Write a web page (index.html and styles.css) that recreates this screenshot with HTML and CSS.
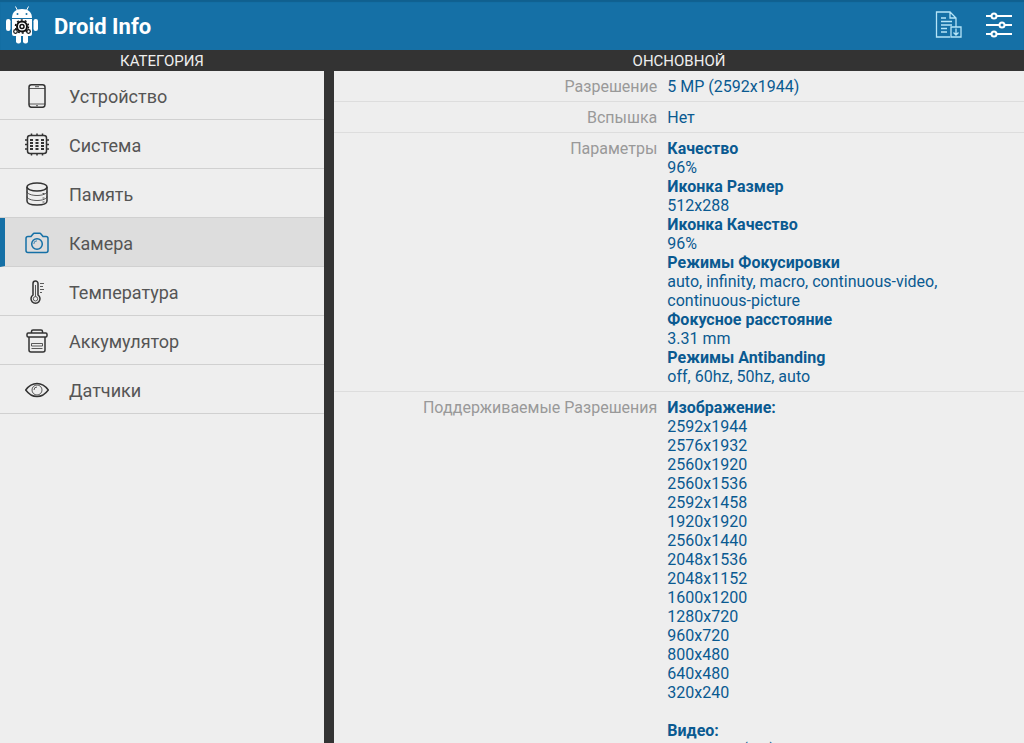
FILE: index.html
```html
<!DOCTYPE html>
<html lang="ru">
	<head>
		<meta charset="UTF-8" />
		<meta name="viewport" content="width=device-width, initial-scale=1.0" />
		<title>Droid Info</title>
		<link rel="stylesheet" href="styles.css">
	</head>
	<body>
		<header class="app-bar">
			<svg class="logo" viewBox="0 0 32 38">
				<g fill="#fff">
					<path d="M6 12C6 6 10 3 16 3S26 6 26 12z" />
					<path d="M6 13h20v15a2 2 0 0 1-2 2H8a2 2 0 0 1-2-2z" />
					<rect x="0" y="13" width="4.500" height="12" rx="2.200" />
					<rect x="27.500" y="13" width="4.500" height="12" rx="2.200" />
					<rect x="10" y="28" width="5" height="9.500" rx="2.200" />
					<rect x="17" y="28" width="5" height="9.500" rx="2.200" />
				</g>
				<path d="M9.500 0.500l2 4M22.500 0.500l-2 4" stroke="#fff" fill="none" />
				<circle cx="11.500" cy="8" r="1" fill="#1570a6" />
				<circle cx="20.500" cy="8" r="1" fill="#1570a6" />
				<g fill="none" stroke="#111">
					<circle cx="16" cy="20.500" r="5" stroke-width="2" />
					<circle cx="16" cy="20.500" r="6.500" stroke-width="1.500" stroke-dasharray="2 2.080" />
					<circle cx="16" cy="20.500" r="2" stroke-width="1.500" />
					<circle cx="9.500" cy="25.500" r="1.800" stroke-width="1.200" />
					<circle cx="22.500" cy="25.500" r="1.800" stroke-width="1.200" />
				</g>
			</svg>
			<h1>Droid Info</h1>
			<button class="icon-btn" type="button" aria-label="Сохранить отчёт">
				<svg width="28" height="28" viewBox="0 0 28 28">
					<path d="M15 26H1.500V1H15l6 6v9M15 1v6h6M6 7h5M6 10.500h11M6 14h11M6 17.500h6M6 21h6" />
					<path d="M16 16h10v10H16zM21 17.500v6M18.500 21.500L21 24l2.500-2.500" />
				</svg>
			</button>
			<button class="icon-btn settings" type="button" aria-label="Настройки">
				<svg width="28" height="28" viewBox="0 0 28 28">
					<path d="M1 5h5M12 5h15M1 14h13M20 14h7M1 23h5M12 23h15" />
					<circle cx="9" cy="5" r="2.500" />
					<circle cx="17" cy="14" r="2.500" />
					<circle cx="9" cy="23" r="2.500" />
				</svg>
			</button>
		</header>

		<main class="panes">
			<section class="pane">
				<h2>КАТЕГОРИЯ</h2>
				<nav class="menu">
					<a href="#device">
						<svg viewBox="0 0 24 24"><rect x="4" y="0.800" width="16" height="22.500" rx="2.500" /><path class="thin" d="M4 4.500h16M4 20h16M10 2.700h4M11 21.700h2" /></svg>
						Устройство
					</a>
					<a href="#system">
						<svg viewBox="0 0 24 24"><rect x="2.500" y="2.500" width="19" height="18" rx="2.500" /><path d="M6.500 0.500v2M12 0.500v2M17.500 0.500v2M6.500 20.500v2M12 20.500v2M17.500 20.500v2M0 7h2.500M0 11.500h2.500M0 16h2.500M21.500 7H24M21.500 11.500H24M21.500 16H24" /><path class="dots" d="M5 7h14M5 10h14M5 13h14M5 16h14" /></svg>
						Система
					</a>
					<a href="#memory">
						<svg viewBox="0 0 24 24"><ellipse cx="12" cy="5" rx="10" ry="4" /><path d="M2 5v14c0 2.500 4.500 4 10 4s10-1.500 10-4V5" /><path class="thin" d="M2 9.500c0 2.200 4.500 4 10 4s10-1.800 10-4M2 14.500c0 2.200 4.500 4 10 4s10-1.800 10-4M17.500 11.500h2M17.500 16h2M17.500 20h2" /></svg>
						Память
					</a>
					<a class="active" href="#camera" aria-current="page">
						<svg viewBox="0 0 24 24"><path d="M3 5.500h3l2-2.500q.5-.700 1.200-.700h5.600q.7 0 1.200.700l2 2.500h3q2 0 2 2v12q0 2-2 2H3q-2 0-2-2v-12q0-2 2-2z" /><circle cx="12" cy="13" r="5.300" /><path class="thin" d="M8.800 13a3.200 3.200 0 0 1 3.200-3.200" /></svg>
						Камера
					</a>
					<a href="#temperature">
						<svg viewBox="0 0 24 24"><path d="M8 15V3.500a2.500 2.500 0 0 1 5 0V15a4.500 4.500 0 1 1-5 0z" /><circle class="thin" cx="10.500" cy="18.800" r="2.200" /><path class="thin" d="M10.500 5v11.500" /><path class="thin" d="M15 3.500h4M15 6.500h3M15 9.500h4M15 12.500h2" /></svg>
						Температура
					</a>
					<a href="#battery">
						<svg viewBox="0 0 24 24"><path d="M6.500 4V2.500Q6.500 1 8 1h8q1.500 0 1.500 1.500V4" /><rect x="2" y="4" width="20" height="4" rx="1.200" /><path d="M4 8v13q0 2 2 2h12q2 0 2-2V8" /><path class="thin" d="M6.500 14.500h11v2.500h-11zM6.500 19.500h11" /></svg>
						Аккумулятор
					</a>
					<a href="#sensors">
						<svg viewBox="0 0 24 24"><path d="M.7 12C4 7.500 8 5.500 12 5.500s8 2 11.300 6.500c-3.300 4.500-7.300 6.500-11.300 6.500S4 16.500.7 12z" /><circle class="thin" cx="12" cy="12" r="5" /><path class="thin" d="M9 12a3 3 0 0 1 3-3" /></svg>
						Датчики
					</a>
				</nav>
			</section>

			<section class="pane">
				<h2>ОНСНОВНОЙ</h2>
				<dl class="details">
					<div class="row">
						<dt>Разрешение</dt>
						<dd>5 MP (2592x1944)</dd>
					</div>
					<div class="row">
						<dt>Вспышка</dt>
						<dd>Нет</dd>
					</div>
					<div class="row">
						<dt>Параметры</dt>
						<dd>
							<b>Качество</b><br>
							96%<br>
							<b>Иконка Размер</b><br>
							512x288<br>
							<b>Иконка Качество</b><br>
							96%<br>
							<b>Режимы Фокусировки</b><br>
							auto, infinity, macro, continuous-video, continuous-picture<br>
							<b>Фокусное расстояние</b><br>
							3.31 mm<br>
							<b>Режимы Antibanding</b><br>
							off, 60hz, 50hz, auto
						</dd>
					</div>
					<div class="row">
						<dt>Поддерживаемые Разрешения</dt>
						<dd>
							<b>Изображение:</b><br>
							2592x1944<br>
							2576x1932<br>
							2560x1920<br>
							2560x1536<br>
							2592x1458<br>
							1920x1920<br>
							2560x1440<br>
							2048x1536<br>
							2048x1152<br>
							1600x1200<br>
							1280x720<br>
							960x720<br>
							800x480<br>
							640x480<br>
							320x240<br>
							<br>
							<b>Видео:</b><br>
							1280x720 (HD)
						</dd>
					</div>
				</dl>
			</section>
		</main>
	</body>
</html>
```
FILE: styles.css
```css
* {
	box-sizing: border-box;
}

body {
	margin: 0;
	height: 100vh;
	display: flex;
	flex-direction: column;
	overflow: hidden;
	font-family: Roboto, sans-serif;
	font-size: 16px;
	line-height: 19px;
	background-color: #eee;
}

/* Top bar */
.app-bar {
	display: flex;
	align-items: center;
	height: 50px;
	flex-shrink: 0;
	padding: 0 11px 0 6px;
	background-color: #1570a6;
	box-shadow: inset 0 2px 1px #10608f;
	color: white;
}

.logo {
	width: 32px;
	height: 38px;
}

.app-bar h1 {
	flex: 1;
	margin: 0 0 0 16px;
	padding-top: 3px;
	font-size: 22px;
	line-height: 26px;
	font-weight: 700;
}

.icon-btn {
	display: flex;
	margin-left: 22px;
	padding: 0;
	border: none;
	background: none;
	cursor: pointer;
}

.icon-btn svg {
	fill: none;
	stroke: #b5e4f7;
	stroke-width: 1.3;
}

.icon-btn.settings svg {
	stroke: white;
	stroke-width: 2;
}

/* Two panes */
.panes {
	flex: 1;
	min-height: 0;
	display: grid;
	grid-template-columns: 324px 1fr;
	grid-template-rows: 100%;
	gap: 10px;
	background-color: #333;
}

.pane {
	display: flex;
	flex-direction: column;
	min-height: 0;
}

.pane h2 {
	margin: 0;
	padding-top: 1px;
	background-color: #333;
	color: #eee;
	font-size: 15px;
	line-height: 20px;
	font-weight: 400;
	text-align: center;
}

.menu,
.details {
	flex: 1;
	min-height: 0;
	margin: 0;
	overflow-y: auto;
	scrollbar-width: none;
	background-color: #eee;
}

.menu a {
	display: flex;
	align-items: center;
	gap: 20px;
	height: 49px;
	padding: 3px 0 0 25px;
	border-bottom: 1px solid #d0d0d0;
	color: #555;
	font-size: 18px;
	text-decoration: none;
}

.menu svg {
	width: 24px;
	height: 24px;
	margin-bottom: 2px;
	fill: none;
	stroke: #333;
	stroke-width: 1.5;
}

.menu .thin {
	stroke-width: 0.8;
}

.menu .dots {
	stroke-width: 2;
	stroke-dasharray: 3 2.5;
}

/* The blue marker takes its width out of the padding */
.menu a.active {
	padding-left: 20px;
	border-left: 5px solid #1570a6;
	background-color: #ddd;
}

.menu a.active svg {
	stroke: #1570a6;
}

.row {
	display: grid;
	grid-template-columns: 47% 1fr;
	padding: 6px 0 5px;
	border-bottom: 1px solid #ddd;
}

.row dt {
	padding-right: 1px;
	color: #999;
	text-align: right;
}

.row dd {
	max-width: 300px;
	margin: 0;
	padding-left: 9px;
	color: #0a5a91;
}
```
